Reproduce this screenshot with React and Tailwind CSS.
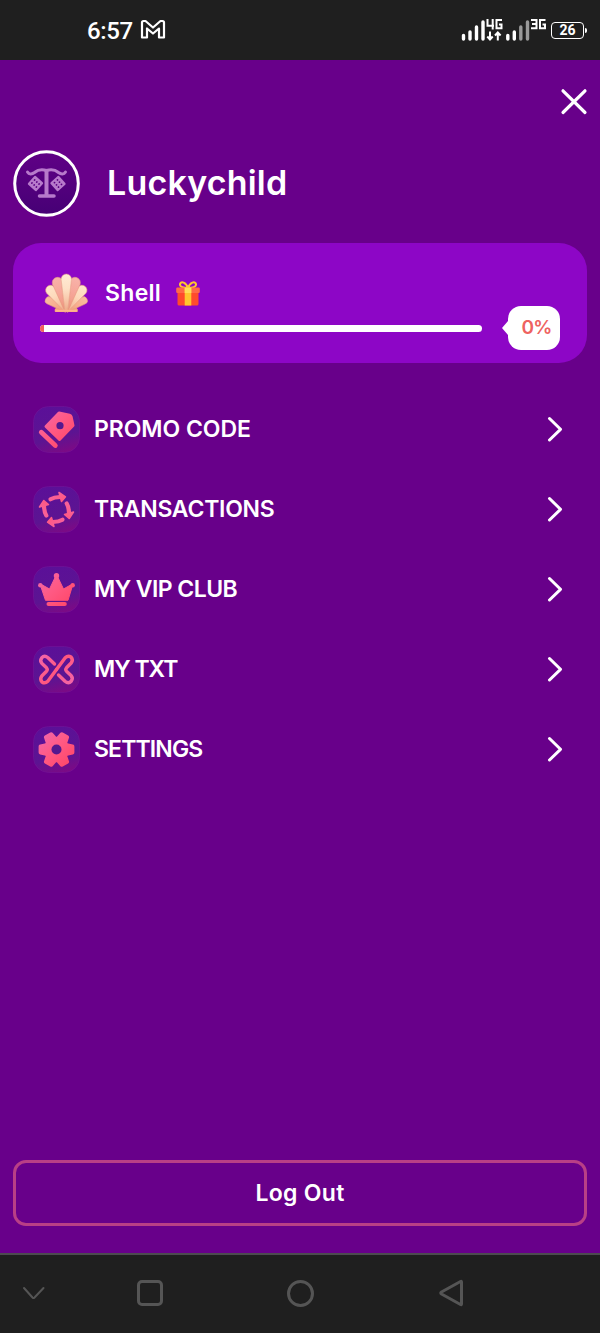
import React from "react";

const DEG = Math.PI / 180;

function StatusBar() {
  return (
    <header className="flex h-[60px] shrink-0 items-center bg-[#1f1f1f] pl-[87px] pr-[13px] text-white">
      <span className="font-[Roboto,sans-serif] text-[24px] font-medium leading-none tracking-[-0.4px] pt-[2px]">6:57</span>
      <svg className="ml-[7px]" width="26" height="22" viewBox="0 0 26 22" fill="none" stroke="#fff" strokeWidth="2.200" strokeLinejoin="round">
        <path d="M2 3.5Q2 2 3.5 2H5.5L13 8.5L20.500 2H22.500Q24 2 24 3.500V18.500H19V9.500L13 14.500L7 9.500V18.500H2Z" />
      </svg>
      <div className="ml-auto flex items-center">
        <svg className="mb-[2px]" width="85" height="28" viewBox="0 0 85 28" fill="none">
          <g strokeWidth="3.400" strokeLinecap="round">
            <path stroke="#fff" d="M2.500 20.500V24M9 17V24M15.500 12V24M22 7V24M46.800 20.500V24M53.300 17V24" />
            <path stroke="#999" d="M59.800 12V24M66.500 7V24" />
          </g>
          <path stroke="#fff" strokeWidth="2" d="M26.500 4V10.800H33M31.700 4V14.500M41 5H35.500V13.300H40.500V9.500H38M70 5H75.500V13.300H70M71 9H75M84.500 5H79V13.300H84V9.500H81.500" />
          <path stroke="#fff" strokeWidth="2" d="M29 16.500V24M26.300 21.500L29 24.500L31.700 21.500M36.800 25.500V17.500M34 20.500L36.800 17.500L39.600 20.500" />
        </svg>
        <div className="ml-[5px] flex h-[17px] w-[33px] items-center justify-center rounded-[4px] border-[1.5px] border-white font-[Roboto,sans-serif] text-[14px] font-bold leading-none">
          26
        </div>
        <div className="ml-px h-[5px] w-[2px] rounded-r-sm bg-white" />
      </div>
    </header>
  );
}

function Avatar() {
  return (
    <svg className="shrink-0" width="67" height="67" viewBox="0 0 67 67">
      <defs>
        <linearGradient id="avatarFill" x1="0" y1="0" x2="0" y2="1">
          <stop offset="0" stopColor="#600086" />
          <stop offset="1" stopColor="#460075" />
        </linearGradient>
      </defs>
      <circle cx="33.500" cy="33.500" r="31.800" fill="url(#avatarFill)" stroke="#fff" strokeWidth="3" />
      <g fill="none" stroke="#b77acb" strokeLinecap="round" strokeLinejoin="round">
        <path strokeWidth="3" d="M14.500 22C16 24.500 19 24.500 21.500 22.500C25 19.500 29 19 33.500 20.500C38 19 42 19.500 45.500 22.500C48 24.500 51 24.500 52.500 22" />
        <path strokeWidth="4" strokeLinecap="butt" d="M33.500 20V45" />
        <path strokeWidth="3.500" d="M26.500 46H41" />
      </g>
      {[22.5, 45].map((x) => (
        <g key={x} transform={`translate(${x} 33.500) rotate(${x < 30 ? 42 : 48})`}>
          <rect x="-5.800" y="-5.800" width="11.600" height="11.600" rx="1.300" fill="#b77acb" />
          {[-3, 0, 3].flatMap((a) => [-2, 2].map((b) => <circle key={`${a}${b}`} cx={a} cy={b} r=".9" fill="#590082" />))}
        </g>
      ))}
    </svg>
  );
}

function Shell() {
  const ribs = [
    [-59, 24, 3.8, "#f9b596"], [59, 24, 3.8, "#f9b596"],
    [-37, 31, 5, "#ffe2c4"], [37, 31, 5, "#ffe2c4"],
    [-17, 35, 5.4, "#f7aaa0"], [17, 35, 5.4, "#f7aaa0"],
    [0, 37, 5.2, "#ffe9cf"],
  ];
  return (
    <svg className="shrink-0" width="46" height="40" viewBox="0 0 46 40">
      <defs>
        <linearGradient id="ribShade" x1="0" y1="0" x2="0" y2="1">
          <stop offset="0" stopColor="#fff" stopOpacity=".1" />
          <stop offset=".4" stopColor="#f09070" stopOpacity=".1" />
          <stop offset="1" stopColor="#e07f58" stopOpacity=".6" />
        </linearGradient>
      </defs>
      <path d="M13 35Q11 36 12 39H34.500Q35.500 36 33.500 35L31 26H15Z" fill="#f6a47d" />
      <g transform="translate(23.300 38)">
        {ribs.map(([angle, length, r, color]) => {
          const d = `M-1.500 0L${-r} ${-length + r}A${r} ${r} 0 0 1 ${r} ${-length + r}L1.500 0Z`;
          return (
            <g key={angle} transform={`rotate(${angle})`} stroke="#e59a80" strokeWidth=".3">
              <path d={d} fill={color} />
              <path d={d} fill="url(#ribShade)" />
            </g>
          );
        })}
      </g>
      <path d="M13.500 37.800H33" stroke="#ffb58c" strokeWidth="2" strokeLinecap="round" />
    </svg>
  );
}

function Gift() {
  return (
    <svg className="shrink-0" width="24" height="25" viewBox="0 0 24 25">
      <path d="M12 7C8 7 3.500 6 4 3C5 0 10 1 12 7C14 1 19 0 20 3C20.500 6 16 7 12 7Z" fill="none" stroke="#ffc72d" strokeWidth="2" />
      <rect x="1.500" y="8" width="21" height="16.500" rx="1.500" fill="#ff4b2b" />
      <rect x=".2" y="6.500" width="23.600" height="5.500" rx="1.200" fill="#ff6847" />
      <path d="M8.700 6.500H15.300V24.500H8.700Z" fill="#ffc72d" />
      <path d="M8.700 6.500H15.300V12H8.700Z" fill="#ffdf58" />
    </svg>
  );
}

const PINK = "url(#pink)";

function PromoGlyph() {
  return (
    <>
      <path d="M26 7L36.500 9.300Q37.800 9.700 38.200 11L40 19.500L26.500 33.500L13 20.500Z" fill={PINK} stroke={PINK} strokeWidth="3" strokeLinejoin="round" />
      <circle cx="27" cy="19.700" r="3.600" fill="#54188f" />
      <path d="M8.300 26.200L22.300 39.500" stroke={PINK} strokeWidth="4.800" strokeLinecap="round" />
    </>
  );
}

function TransactionsGlyph() {
  return [0, 90, 180, 270].map((angle) => (
    <g key={angle} transform={`rotate(${angle} 23.500 23.500)`}>
      <path d="M17.500 13.300Q21 11.200 27 11" fill="none" stroke={PINK} strokeWidth="4.200" strokeLinecap="round" />
      <path d="M26 6.500L32.500 10.800L28.500 15.500Z" fill={PINK} stroke={PINK} strokeWidth="1.500" strokeLinejoin="round" />
    </g>
  ));
}

function CrownGlyph() {
  return (
    <>
      <g fill={PINK}>
        <circle cx="23.500" cy="9.800" r="2.700" />
        <circle cx="7.300" cy="19.300" r="2.200" />
        <circle cx="39.700" cy="19.300" r="2.200" />
        <path d="M7.500 19.500L9 18.800L16.500 23L22.300 11H24.700L30.500 23L38 18.800L39.500 19.500L35 34.300H12.500Z" stroke={PINK} strokeLinejoin="round" />
      </g>
      <path d="M15.500 38H31.800" stroke={PINK} strokeWidth="4" strokeLinecap="round" />
    </>
  );
}

function TxtGlyph() {
  const half = "M21.500 18L15 11.800Q11.500 8.900 8.800 11.700Q6.500 14.800 9 17.500L13.500 21.800Q15 23.500 13.500 25.200L8.800 30Q6.500 33.200 9 36Q12 38 14.800 35.300L23.500 23.500";
  return (
    <g fill="none" stroke={PINK} strokeWidth="3.400" strokeLinecap="round" strokeLinejoin="round">
      <path d={half} />
      <path d={half} transform="rotate(180 23.500 23.500)" />
    </g>
  );
}

function GearGlyph() {
  const points = [0, 1, 2, 3, 4, 5]
    .flatMap((i) => [[11, -23], [16.3, -11], [16.3, 11], [11, 23]].map(([r, a]) => {
      const t = (i * 60 + a) * DEG;
      return `${(23.5 + r * Math.cos(t)).toFixed(2)},${(23.5 + r * Math.sin(t)).toFixed(2)}`;
    }))
    .join(" ");
  return (
    <>
      <polygon points={points} fill={PINK} stroke={PINK} strokeWidth="3.800" strokeLinejoin="round" />
      <circle cx="23.500" cy="23.500" r="5" fill="#54188f" />
    </>
  );
}

const MENU = [
  { label: "PROMO CODE", Glyph: PromoGlyph, spacing: "tracking-[-0.05px]" },
  { label: "TRANSACTIONS", Glyph: TransactionsGlyph, spacing: "tracking-[-0.25px]" },
  { label: "MY VIP CLUB", Glyph: CrownGlyph, spacing: "tracking-[-0.55px]" },
  { label: "MY TXT", Glyph: TxtGlyph, spacing: "tracking-[-1px]" },
  { label: "SETTINGS", Glyph: GearGlyph, spacing: "tracking-[-0.85px]" },
];

function MenuRow({ label, Glyph, spacing }) {
  return (
    <a className="flex h-20 items-center pl-[33px] pr-[36px]">
      <svg className="shrink-0" width="47" height="47" viewBox="0 0 47 47">
        <rect x=".5" y=".5" width="46" height="46" rx="15" fill="url(#tile)" stroke="#751698" strokeOpacity=".7" strokeWidth=".8" />
        <Glyph />
      </svg>
      <span className={`ml-[14px] whitespace-nowrap text-[23px] font-semibold leading-none ${spacing}`}>{label}</span>
      <svg className="ml-auto" width="18" height="26" viewBox="0 0 18 26" fill="none" stroke="#fff" strokeWidth="3" strokeLinecap="round" strokeLinejoin="round">
        <path d="M3.500 2.500L14.500 13.300L3.500 24" />
      </svg>
    </a>
  );
}

function NavBar() {
  return (
    <nav className="flex h-20 shrink-0 items-center border-t-2 border-[#4d4a50] bg-[#1f1f1f] pb-[2px] text-[#555]">
      <svg className="ml-[22px]" width="24" height="16" viewBox="0 0 24 16" fill="none" stroke="currentColor" strokeWidth="2" strokeLinecap="round" strokeLinejoin="round">
        <path d="M2 3L10.500 12.500Q11.500 13.500 12.500 12.500L21.500 3" />
      </svg>
      <div className="ml-[91px] size-[26px] rounded-[5px] border-[3px] border-current" />
      <div className="ml-[124px] size-[27px] rounded-full border-[3px] border-current" />
      <svg className="ml-[124px]" width="26" height="28" viewBox="0 0 26 28" fill="none" stroke="currentColor" strokeWidth="3" strokeLinejoin="round">
        <path d="M23.500 3V25Q23.500 26 22.500 25.500L3.500 15Q2 14 3.500 13L22.500 2.500Q23.500 2 23.500 3Z" />
      </svg>
    </nav>
  );
}

export default function App() {
  return (
    <div className="flex h-[1333px] w-[600px] flex-col overflow-hidden bg-[#68008a] font-[Inter,sans-serif] text-white">
      <svg className="h-0 w-0 shrink-0" aria-hidden="true">
        <defs>
          <linearGradient id="pink" gradientUnits="userSpaceOnUse" x1="7" y1="6" x2="40" y2="40">
            <stop offset="0" stopColor="#ef67b0" />
            <stop offset=".45" stopColor="#ff5a85" />
            <stop offset="1" stopColor="#ff4565" />
          </linearGradient>
          <linearGradient id="tile" x1=".35" y1="0" x2=".65" y2="1">
            <stop offset="0" stopColor="#5b1098" />
            <stop offset=".65" stopColor="#5c1492" />
            <stop offset="1" stopColor="#7c0a85" />
          </linearGradient>
        </defs>
      </svg>
      <StatusBar />
      <main className="flex min-h-0 grow flex-col">
        <div className="flex h-[90px] shrink-0 justify-end pr-[12px] pt-[28px]">
          <svg width="28" height="28" viewBox="0 0 28 28" stroke="#fff" strokeWidth="3.200" strokeLinecap="round">
            <path d="M3 2.800L25 24.500M25 2.800L3 24.500" />
          </svg>
        </div>
        <div className="flex h-[67px] shrink-0 items-center pl-[13px]">
          <Avatar />
          <h1 className="ml-[27px] pb-[2px] text-[34px] font-semibold leading-none tracking-[0.2px]">Luckychild</h1>
        </div>
        <section className="mx-[13px] mt-[26px] h-[120px] shrink-0 rounded-[28px] bg-[#8d06c6] pl-[27px] pr-[27px] pt-[30px]">
          <div className="flex h-[40px] items-center pl-[3px]">
            <Shell />
            <span className="ml-[16px] w-[56px] text-[23px] font-semibold leading-none tracking-[0.3px]">Shell</span>
            <div className="ml-[15px]"><Gift /></div>
          </div>
          <div className="-mt-[7px] flex h-[44px] items-center">
            <div className="h-[7px] w-[442px] overflow-hidden rounded-full bg-white">
              <div className="h-full w-[4px] bg-[#f25f5c]" />
            </div>
            <svg className="ml-[20px]" width="6" height="16" viewBox="0 0 6 16"><path d="M6 1L0 8L6 15Z" fill="#fff" /></svg>
            <div className="flex h-[44px] w-[52px] items-center justify-center rounded-[13px] bg-white pb-[2px] pl-[5px] text-[19px] font-semibold leading-none tracking-[-0.9px] text-[#ee6260]">0%</div>
          </div>
        </section>
        <div className="mt-[26px] flex shrink-0 flex-col">
          {MENU.map((item) => <MenuRow key={item.label} {...item} />)}
        </div>
        <button className="mx-[13px] mb-[27px] mt-auto flex h-[66px] shrink-0 items-center justify-center rounded-[13px] border-[3px] border-[#b93f86] text-[23px] font-semibold leading-none tracking-[0.3px]">
          Log Out
        </button>
      </main>
      <NavBar />
    </div>
  );
}
